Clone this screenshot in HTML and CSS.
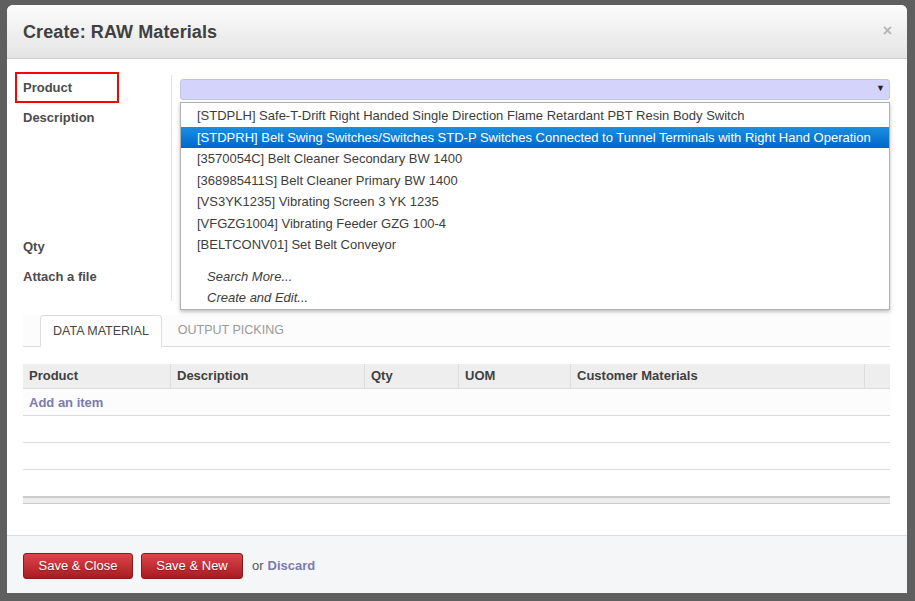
FILE: index.html
```html
<!DOCTYPE html>
<html>
<head>
<meta charset="utf-8">
<link rel="stylesheet" href="styles.css">
</head>
<body>
<div class="dialog">
  <div class="header">
    <h1 class="title">Create: RAW Materials</h1>
    <span class="close">×</span>
  </div>
  <div class="body">
    <div class="form">
      <div class="labels">
        <div class="label label-product"><span class="hl">Product</span></div>
        <div class="label label-desc">Description</div>
        <div class="label label-qty">Qty</div>
        <div class="label label-attach">Attach a file</div>
      </div>
      <div class="fields">
        <div class="select">
          <span class="caret">▼</span>
        </div>
        <ul class="dropdown">
          <li>[STDPLH] Safe-T-Drift Right Handed Single Direction Flame Retardant PBT Resin Body Switch</li>
          <li class="active">[STDPRH] Belt Swing Switches/Switches STD-P Switches Connected to Tunnel Terminals with Right Hand Operation</li>
          <li>[3570054C] Belt Cleaner Secondary BW 1400</li>
          <li>[368985411S] Belt Cleaner Primary BW 1400</li>
          <li>[VS3YK1235] Vibrating Screen 3 YK 1235</li>
          <li>[VFGZG1004] Vibrating Feeder GZG 100-4</li>
          <li>[BELTCONV01] Set Belt Conveyor</li>
          <li class="extra first-extra">Search More...</li>
          <li class="extra">Create and Edit...</li>
        </ul>
      </div>
    </div>
    <div class="tabs">
      <div class="tab active">DATA MATERIAL</div>
      <div class="tab">OUTPUT PICKING</div>
    </div>
    <div class="table">
      <div class="row head">
        <div class="c c1">Product</div>
        <div class="c c2">Description</div>
        <div class="c c3">Qty</div>
        <div class="c c4">UOM</div>
        <div class="c c5">Customer Materials</div>
        <div class="c c6"></div>
      </div>
      <div class="row add"><a class="add-link">Add an item</a></div>
      <div class="row empty"></div>
      <div class="row empty"></div>
      <div class="row empty"></div>
      <div class="table-foot"></div>
    </div>
  </div>
  <div class="footer">
    <button class="btn btn-close">Save &amp; Close</button>
    <button class="btn btn-new">Save &amp; New</button>
    <span class="or">or</span>
    <a class="discard">Discard</a>
  </div>
</div>
</body>
</html>
```

FILE: styles.css
```css
html, body {
  margin: 0;
  padding: 0;
}
body {
  background: #5f5f5f;
  font-family: "Liberation Sans", Arial, sans-serif;
  font-size: 13px;
  color: #4c4c4c;
  width: 915px;
  height: 601px;
  overflow: hidden;
  padding: 5px 0 0 7px;
  box-sizing: border-box;
}
.dialog {
  width: 900px;
  height: 588px;
  background: #fff;
  border-radius: 6px 6px 0 0;
  display: flex;
  flex-direction: column;
  overflow: hidden;
}
.header {
  height: 54px;
  flex: none;
  background: linear-gradient(#fcfcfc, #e4e4e4);
  border-bottom: 1px solid #cfcfcf;
  display: flex;
  align-items: center;
  justify-content: space-between;
  padding: 0 16px;
  box-sizing: border-box;
}
.title {
  margin: 0;
  font-size: 18px;
  font-weight: bold;
  color: #404040;
  margin-top: 2px;
  letter-spacing: 0.1px;
}
.close {
  color: #b5b5b5;
  font-size: 16px;
  font-weight: bold;
  margin-right: -1px;
  margin-top: -2px;
}
.body {
  flex: 1;
  padding: 0 17px 0 16px;
  position: relative;
}
.form {
  display: flex;
  height: 250px;
  padding-top: 10px;
  box-sizing: border-box;
}
.labels {
  width: 148px;
  flex: none;
  border-right: 1px solid #e2e2e2;
  margin-top: 6px;
  height: 226px;
  position: relative;
}
.label {
  font-weight: bold;
  color: #4c4c4c;
  height: 15px;
  line-height: 15px;
}
.label-product {
  margin-top: 5px;
}
.hl {
  display: inline-block;
  border: 2px solid #f00;
  padding: 6px 45px 6px 6px;
  margin-left: -8px;
  line-height: 15px;
  margin-top: -9px;
}
.label-desc { margin-top: 15px; }
.label-qty { margin-top: 114px; }
.label-attach { margin-top: 15px; }
.fields {
  flex: 1;
  padding-left: 8px;
  padding-top: 10px;
  position: relative;
}
.select {
  height: 21px;
  box-sizing: border-box;
  background: #d3d3fb;
  border: 1px solid #c4c4e0;
  border-radius: 3px;
  position: relative;
  width: 710px;
}
.caret {
  position: absolute;
  right: 4px;
  top: 3px;
  font-size: 9px;
  color: #222;
}
.dropdown {
  position: absolute;
  left: 8px;
  top: 33px;
  width: 710px;
  height: 208px;
  box-sizing: border-box;
  margin: 0;
  padding: 2px 0 0;
  list-style: none;
  background: #fff;
  border: 1px solid #b0b0b0;
  box-shadow: 0 2px 4px rgba(0,0,0,0.25);
  z-index: 5;
}
.dropdown li {
  height: 21.5px;
  line-height: 21.5px;
  padding-left: 16px;
  color: #3d3d3d;
  white-space: nowrap;
  overflow: hidden;
}
.dropdown li.active {
  background: linear-gradient(#1a8fe0, #0066cc);
  color: #fff;
}
.dropdown li.extra {
  font-style: italic;
  padding-left: 26px;
}
.dropdown li.first-extra {
  margin-top: 10px;
}
.tabs {
  display: flex;
  margin-top: 6px;
  height: 32px;
  border-bottom: 1px solid #dcdcdc;
  padding-left: 17px;
  background: #fcfcfc;
  width: 867px;
  box-sizing: border-box;
}
.tab {
  padding: 0 12px;
  line-height: 31px;
  height: 32px;
  box-sizing: border-box;
  color: #999;
  font-size: 12.5px;
  margin-right: 4px;
}
.tab.active {
  color: #444;
  background: #fff;
  border: 1px solid #dcdcdc;
  border-bottom-color: #fff;
  border-radius: 4px 4px 0 0;
}
.table {
  margin-top: 17px;
  width: 867px;
}
.row {
  display: flex;
  border-bottom: 1px solid #dcdcdc;
  box-sizing: border-box;
}
.row.head {
  background: #eeeeee;
  height: 25px;
}
.c {
  font-weight: bold;
  color: #404040;
  line-height: 24px;
  padding-left: 6px;
  box-sizing: border-box;
  border-right: 1px solid #dcdcdc;
}
.c1 { width: 148px; }
.c2 { width: 194px; }
.c3 { width: 94px; }
.c4 { width: 112px; }
.c5 { width: 294px; }
.c6 { width: 25px; border-right: none; }
.row.add {
  height: 27px;
  background: #fcfcfc;
  padding-left: 6px;
  align-items: center;
}
.add-link {
  color: #7c7bad;
  font-weight: bold;
}
.row.empty {
  height: 27px;
}
.table-foot {
  height: 8px;
  border-top: 2px solid #ccc;
  border-bottom: 1px solid #ccc;
  background: #ececec;
  box-sizing: border-box;
  margin-top: -1px;
}
.footer {
  height: 58px;
  flex: none;
  background: #f5f6f8;
  border-top: 1px solid #dcdcdc;
  display: flex;
  align-items: center;
  padding-left: 16px;
  box-sizing: border-box;
}
.btn {
  height: 26px;
  border: 1px solid #8a1a1e;
  border-radius: 3px;
  background: linear-gradient(#dc454b, #a91b21);
  color: #fff;
  font-family: "Liberation Sans", Arial, sans-serif;
  font-size: 13px;
  text-shadow: 0 1px 1px rgba(0,0,0,0.3);
  padding: 0;
  margin-right: 8px;
  margin-top: 2px;
}
.btn-close { width: 110px; }
.btn-new { width: 102px; }
.or {
  color: #555;
  margin-left: 1px;
  margin-top: 2px;
}
.discard {
  color: #7c7bad;
  font-weight: bold;
  margin-left: 4px;
  margin-top: 2px;
}
```
